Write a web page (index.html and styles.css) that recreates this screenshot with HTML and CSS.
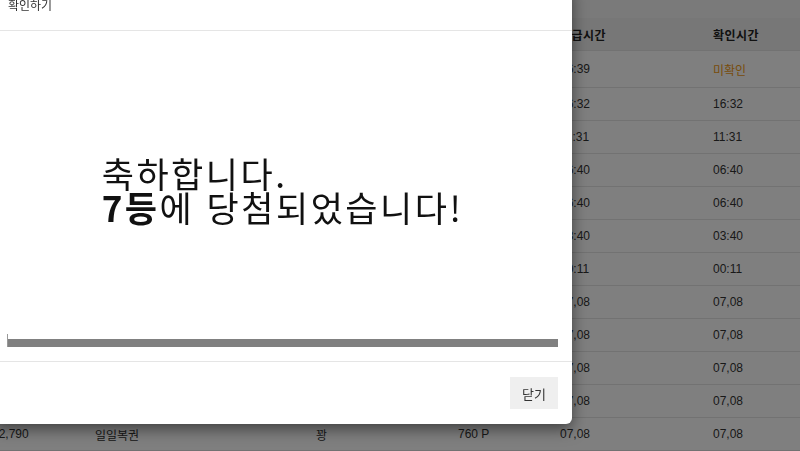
FILE: index.html
```html
<!DOCTYPE html>
<html lang="ko">
<head>
    <meta charset="UTF-8">
    <title>당첨 확인</title>
    <link rel="stylesheet" href="styles.css">
</head>
<body>
    <section class="history">
        <div class="table">
            <div class="row head">
                <div>지급포인트</div><div>복권종류</div><div>결과</div><div>포인트</div><div>지급시간</div><div>확인시간</div>
            </div>
            <div class="row first">
                <div>12,790</div><div>일일복권</div><div>7등</div><div>10 P</div><div>16:39</div><div class="unread">미확인</div>
            </div>
            <div class="row">
                <div>12,780</div><div>일일복권</div><div>꽝</div><div>760 P</div><div>16:32</div><div>16:32</div>
            </div>
            <div class="row">
                <div>12,790</div><div>일일복권</div><div>꽝</div><div>760 P</div><div>11:31</div><div>11:31</div>
            </div>
            <div class="row">
                <div>12,790</div><div>일일복권</div><div>꽝</div><div>760 P</div><div>06:40</div><div>06:40</div>
            </div>
            <div class="row">
                <div>12,790</div><div>일일복권</div><div>꽝</div><div>760 P</div><div>06:40</div><div>06:40</div>
            </div>
            <div class="row">
                <div>12,790</div><div>일일복권</div><div>꽝</div><div>760 P</div><div>03:40</div><div>03:40</div>
            </div>
            <div class="row">
                <div>12,790</div><div>일일복권</div><div>꽝</div><div>760 P</div><div>00:11</div><div>00:11</div>
            </div>
            <div class="row">
                <div>12,790</div><div>일일복권</div><div>꽝</div><div>760 P</div><div>07,08</div><div>07,08</div>
            </div>
            <div class="row">
                <div>12,790</div><div>일일복권</div><div>꽝</div><div>760 P</div><div>07,08</div><div>07,08</div>
            </div>
            <div class="row">
                <div>12,790</div><div>일일복권</div><div>꽝</div><div>760 P</div><div>07,08</div><div>07,08</div>
            </div>
            <div class="row">
                <div>12,790</div><div>일일복권</div><div>꽝</div><div>760 P</div><div>07,08</div><div>07,08</div>
            </div>
            <div class="row">
                <div>12,790</div><div>일일복권</div><div>꽝</div><div>760 P</div><div>07,08</div><div>07,08</div>
            </div>
        </div>
    </section>

    <div class="backdrop"></div>

    <div class="modal">
        <div class="modal-header">확인하기</div>
        <div class="modal-body">
            <div class="message">
                <p>축하합니다.<br><b>7등</b>에 당첨되었습니다!</p>
            </div>
            <div class="progress"><div class="progress-bar"></div></div>
        </div>
        <div class="modal-footer">
            <button class="btn-close">닫기</button>
        </div>
    </div>
</body>
</html>
```

FILE: styles.css
```css
body {
    margin: 0;
    background-color: #f4f4f4;
    font-family: "Liberation Sans", "Noto Sans CJK KR", sans-serif;
    color: #333;
    overflow: hidden;
}

.history {
    padding-top: 18px;
    margin-left: -8px;
}

.table {
    background-color: #fff;
    font-size: 12px;
}

.row {
    display: grid;
    grid-template-columns: 103px 221px 142px 102px 153px 1fr;
    height: 33px;
    align-items: center;
    border-bottom: 1px solid #e4e4e4;
    box-sizing: border-box;
}

.row.head {
    background-color: #eee;
    font-weight: bold;
    letter-spacing: 0.5px;
    color: #222;
}

.row.first {
    height: 37px;
}

.unread {
    color: #f09a14;
}

.backdrop {
    position: fixed;
    top: 0;
    left: 0;
    right: 0;
    bottom: 0;
    background-color: rgba(0, 0, 0, 0.5);
}

.modal {
    position: absolute;
    top: -14px;
    left: -7px;
    width: 579px;
    background-color: #fff;
    border-radius: 6px;
    box-shadow: 0 5px 15px rgba(0, 0, 0, 0.5);
    font-family: "Noto Sans CJK KR", sans-serif;
}

.modal-header {
    padding: 10px 15px 16px;
    font-size: 12px;
    line-height: 18px;
    color: #333;
    border-bottom: 1px solid #e5e5e5;
}

.modal-body {
    height: 330px;
    padding: 0 14px 14px;
    box-sizing: border-box;
    display: flex;
    flex-direction: column;
}

.message {
    display: flex;
    justify-content: center;
    padding-top: 125px;
}

.message p {
    margin: 0;
    font-size: 35px;
    line-height: 34px;
    letter-spacing: 2.5px;
    color: #111;
}

.progress {
    margin-top: auto;
    height: 13px;
    border-left: 1px solid #999;
    display: flex;
    align-items: flex-end;
}

.progress-bar {
    flex: 1;
    height: 8px;
    background-color: #808080;
}

.modal-footer {
    display: flex;
    justify-content: flex-end;
    padding: 15px 14px;
    border-top: 1px solid #e5e5e5;
}

.btn-close {
    height: 32px;
    padding: 0 12px;
    border: none;
    border-radius: 0;
    background-color: #efefef;
    color: #333;
    font-family: "Noto Sans CJK KR", sans-serif;
    font-size: 13px;
}
```
